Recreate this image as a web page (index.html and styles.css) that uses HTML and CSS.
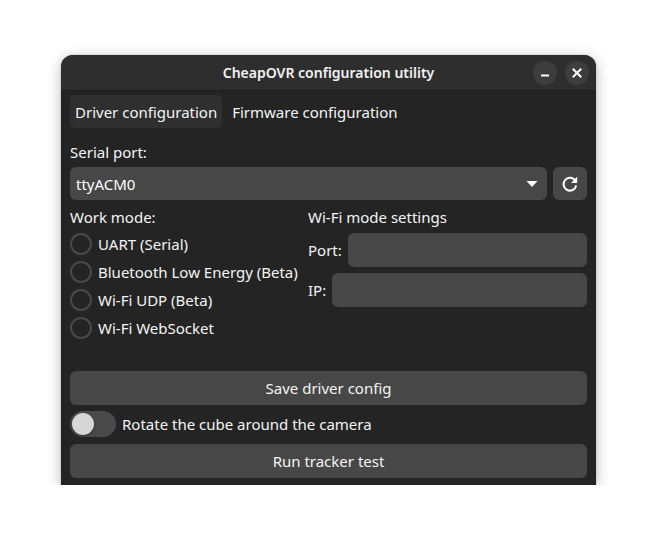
FILE: index.html
```html
<!DOCTYPE html>
<html>
<head>
<meta charset="utf-8">
<link rel="stylesheet" href="styles.css">
</head>
<body>
<div class="window">
  <div class="titlebar">
    <div class="title">CheapOVR configuration utility</div>
    <div class="wbtns">
      <span class="wbtn"><svg width="24" height="24" viewBox="0 0 24 24"><rect x="8" y="13.5" width="8" height="2" fill="#fff"/></svg></span>
      <span class="wbtn"><svg width="24" height="24" viewBox="0 0 24 24"><path d="M8.5 8.5 L15.5 15.5 M15.5 8.5 L8.5 15.5" stroke="#fff" stroke-width="2" stroke-linecap="square"/></svg></span>
    </div>
  </div>
  <div class="content">
    <div class="tabs">
      <div class="tab active">Driver configuration</div>
      <div class="tab">Firmware configuration</div>
    </div>
    <div class="label serial">Serial port:</div>
    <div class="portrow">
      <div class="combo"><span>ttyACM0</span><svg width="12" height="8" viewBox="0 0 12 8"><path d="M0.5 1 L11.5 1 L6 7 Z" fill="#fff"/></svg></div>
      <div class="refresh"><svg width="20" height="20" viewBox="0 0 20 20"><path d="M15.6 7.2 A6.4 6.4 0 1 0 16.2 11.5" fill="none" stroke="#fff" stroke-width="2"/><path d="M17.2 2.8 L17.2 9 L11 9 Z" fill="#fff"/></svg></div>
    </div>
    <div class="cols">
      <div class="col">
        <div class="label head">Work mode:</div>
        <div class="radios">
          <div class="radio"><span class="circle"></span>UART (Serial)</div>
          <div class="radio"><span class="circle"></span>Bluetooth Low Energy (Beta)</div>
          <div class="radio"><span class="circle"></span>Wi-Fi UDP (Beta)</div>
          <div class="radio"><span class="circle"></span>Wi-Fi WebSocket</div>
        </div>
      </div>
      <div class="col">
        <div class="label head">Wi-Fi mode settings</div>
        <div class="field"><span>Port:</span><div class="entry"></div></div>
        <div class="field"><span>IP:</span><div class="entry"></div></div>
      </div>
    </div>
    <div class="button save">Save driver config</div>
    <div class="switchrow"><span class="switch"><span class="knob"></span></span>Rotate the cube around the camera</div>
    <div class="button">Run tracker test</div>
  </div>
</div>
</body>
</html>
```

FILE: styles.css
```css
html, body {
  margin: 0;
  background: #ffffff;
}
body {
  font-family: "Noto Sans", "Open Sans", sans-serif;
  font-size: 15px;
  color: #ffffff;
}
.window {
  margin: 55px 0 0 61px;
  width: 535px;
  height: 430px;
  background: #242424;
  border-radius: 12px 12px 0 0;
  box-shadow: 0 3px 14px rgba(0, 0, 0, 0.28), 0 0 0 1px rgba(0, 0, 0, 0.06);
  overflow: hidden;
}
.titlebar {
  height: 35px;
  background: #2e2e2e;
  border-bottom: 1px solid #1e1e1e;
  display: flex;
  align-items: center;
  justify-content: center;
  position: relative;
}
.title {
  font-weight: 600;
  font-size: 14px;
  color: #f2f2f2;
}
.wbtns {
  position: absolute;
  right: 7px;
  top: 6px;
  display: flex;
  gap: 8px;
}
.wbtn {
  width: 24px;
  height: 24px;
  border-radius: 50%;
  background: #3d3d3d;
  display: flex;
}
.content {
  padding: 4px 9px 0 9px;
  display: flex;
  flex-direction: column;
}
.tabs {
  display: flex;
  gap: 5px;
  height: 33px;
}
.tab {
  padding: 0 5px;
  display: flex;
  align-items: center;
  border-radius: 5px;
  color: #f4f4f4;
}
.tab.active {
  background: #2f2f2f;
}
.label {
  height: 20px;
  line-height: 20px;
  color: #f4f4f4;
}
.serial {
  margin-top: 14px;
}
.portrow {
  margin-top: 5px;
  display: flex;
  gap: 6px;
  height: 33px;
}
.combo {
  flex: 1;
  background: #474747;
  border-radius: 6px;
  display: flex;
  align-items: center;
  justify-content: space-between;
  padding: 0 9px 0 6px;
}
.refresh {
  width: 34px;
  background: #474747;
  border-radius: 6px;
  display: flex;
  align-items: center;
  justify-content: center;
}
.cols {
  display: grid;
  grid-template-columns: 232px 1fr;
  column-gap: 6px;
  margin-top: 7px;
}
.col {
  display: flex;
  flex-direction: column;
}
.radios {
  margin-top: 3px;
  display: flex;
  flex-direction: column;
}
.radio {
  height: 28px;
  display: flex;
  align-items: center;
  color: #f4f4f4;
  white-space: nowrap;
}
.circle {
  width: 18px;
  height: 18px;
  border: 2px solid #4a4a4a;
  border-radius: 50%;
  margin-right: 6px;
  flex: none;
}
.field {
  display: flex;
  align-items: center;
  gap: 6px;
  margin-top: 6px;
  color: #f4f4f4;
}
.entry {
  flex: 1;
  height: 34px;
  background: #474747;
  border-radius: 6px;
}
.button {
  height: 34px;
  background: #474747;
  border-radius: 6px;
  display: flex;
  align-items: center;
  justify-content: center;
  color: #f4f4f4;
}
.save {
  margin-top: 29px;
}
.switchrow {
  height: 26px;
  margin: 6px 0 7px 0;
  display: flex;
  align-items: center;
  gap: 6px;
  color: #f4f4f4;
}
.switch {
  width: 46px;
  height: 26px;
  border-radius: 13px;
  background: #4a4a4a;
  display: flex;
  align-items: center;
  padding-left: 2px;
  box-sizing: border-box;
}
.knob {
  width: 22px;
  height: 22px;
  border-radius: 50%;
  background: #d6d6d6;
  box-shadow: 0 1px 2px rgba(0,0,0,0.4);
}
```
